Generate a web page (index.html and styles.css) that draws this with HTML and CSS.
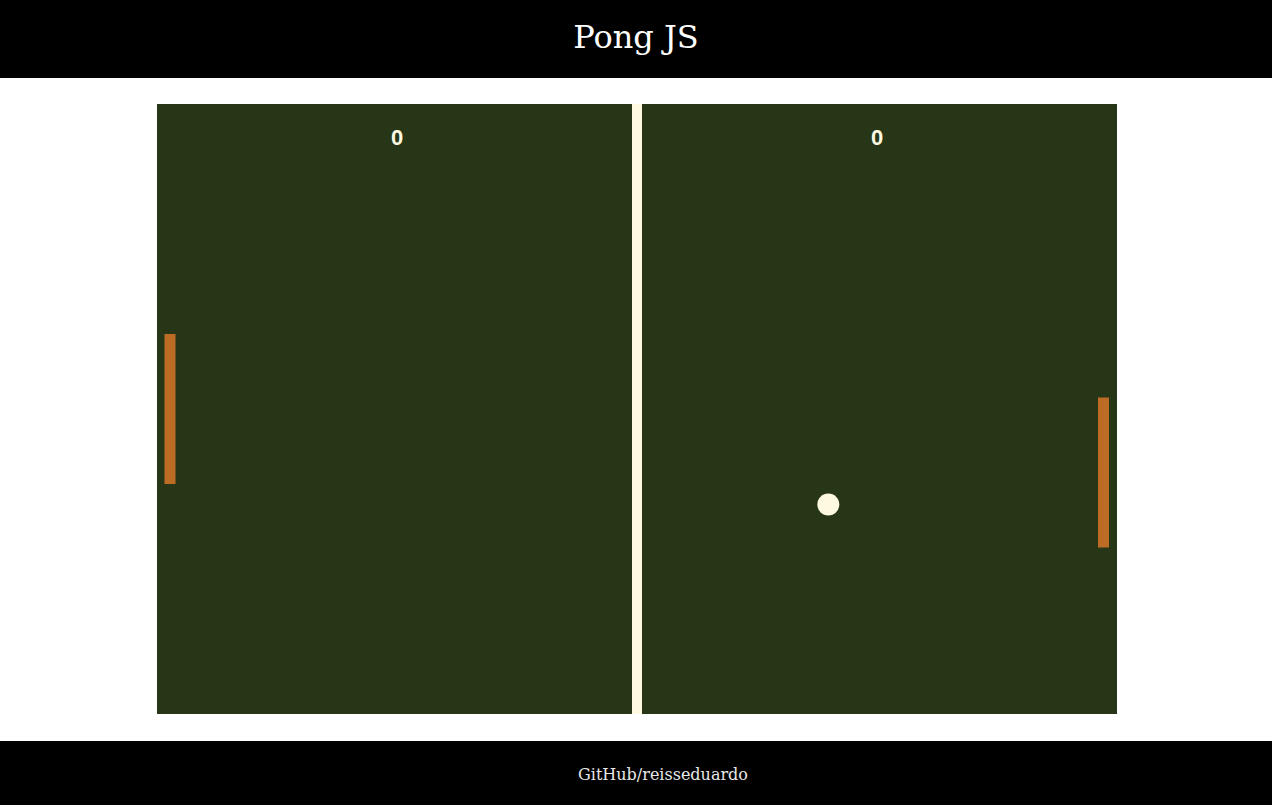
FILE: index.html
```html
<!DOCTYPE html>
<html lang="en">
<head>
<meta charset="utf-8">
<title>Pong JS</title>
<link rel="stylesheet" href="styles.css">
</head>
<body>
<header class="site-header">
  <h1 class="title">Pong JS</h1>
</header>
<main class="stage">
  <svg class="board" width="960" height="610" viewBox="0 0 960 610" xmlns="http://www.w3.org/2000/svg">
    <rect x="0" y="0" width="960" height="610" fill="#283618"/>
    <rect x="475" y="0" width="10" height="610" fill="#fefae0"/>
    <text x="240" y="41" class="score" text-anchor="middle">0</text>
    <text x="720" y="41" class="score" text-anchor="middle">0</text>
    <rect x="7.5" y="230" width="11" height="150" fill="#bc6c25"/>
    <rect x="941" y="293.5" width="11" height="150" fill="#bc6c25"/>
    <circle cx="671.3" cy="400.5" r="11" fill="#fefae0"/>
  </svg>
</main>
<footer class="site-footer">
  <span class="credit">GitHub/reisseduardo</span>
</footer>
</body>
</html>
```
FILE: styles.css
```css
html, body {
  margin: 0;
  padding: 0;
  background: #ffffff;
  font-family: "DejaVu Serif", serif;
}
.site-header {
  height: 78px;
  box-sizing: border-box;
  padding-bottom: 4px;
  background: #000;
  display: flex;
  align-items: center;
  justify-content: center;
}
.title {
  margin: 0;
  font-size: 32px;
  font-weight: normal;
  color: #ffffff;
  line-height: 1;
}
.stage {
  display: flex;
  justify-content: center;
  padding: 26px 0 27px 2px;
}
.board {
  display: block;
}
.score {
  font-family: "Liberation Sans", Arial, sans-serif;
  font-weight: bold;
  font-size: 22px;
  fill: #fefae0;
}
.site-footer {
  height: 64px;
  box-sizing: border-box;
  padding-top: 2px;
  background: #000;
  display: flex;
  align-items: center;
  justify-content: center;
  padding-left: 54px;
}
.credit {
  font-size: 16px;
  color: #e8e8e8;
}
```
